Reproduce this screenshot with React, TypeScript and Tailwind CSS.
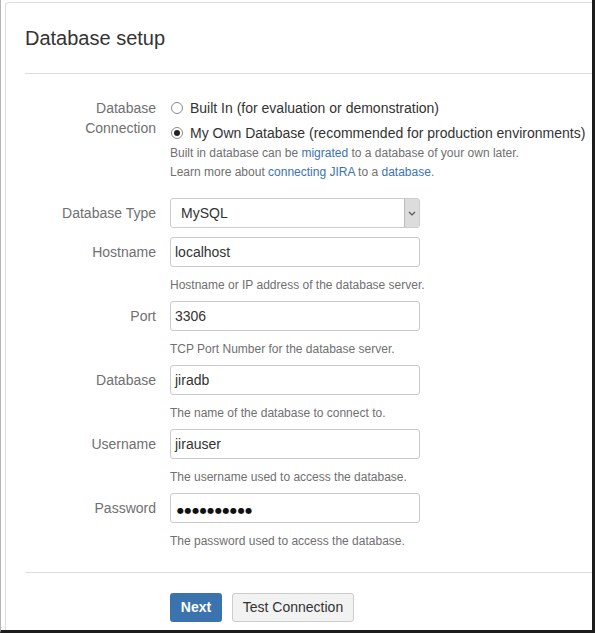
import { ReactNode } from "react";

const font = { fontFamily: '"Liberation Sans", Arial, sans-serif' };

function Label({ children, tall }: { children: ReactNode; tall?: boolean }) {
  return (
    <div
      className={
        "w-[131px] shrink-0 text-right text-[14px] text-[#707070] " +
        (tall ? "leading-[20px]" : "leading-[30px]")
      }
    >
      {children}
    </div>
  );
}

function Help({ children }: { children: ReactNode }) {
  return <div className="mt-[8px] text-[12px] leading-[20px] text-[#707070]">{children}</div>;
}

function Radio({ checked }: { checked?: boolean }) {
  return (
    <span className="inline-flex h-[12px] w-[12px] items-center justify-center rounded-full border border-[#8a8a8a] bg-white">
      {checked && <span className="h-[6px] w-[6px] rounded-full bg-[#222]" />}
    </span>
  );
}

function Field({
  label,
  value,
  help,
}: {
  label: string;
  value: ReactNode;
  help: string;
}) {
  return (
    <div className="mb-[6px] flex">
      <Label>{label}</Label>
      <div className="ml-[14px]">
        <div className="h-[30px] w-[250px] rounded-[3px] border border-[#cccccc] px-[4px] text-[14px] leading-[28px] text-[#333]">
          {value}
        </div>
        <Help>{help}</Help>
      </div>
    </div>
  );
}

export default function App() {
  return (
    <div
      style={font}
      className="h-[633px] w-[595px] overflow-hidden border-b-[3px] border-l border-r-[3px] border-b-[#1c1c1c] border-l-[#b5b5b5] border-r-[#1c1c1c] bg-white pl-[4px] pt-[2px]"
    >
      <div className="h-[640px] rounded-tl-[4px] border-l border-t border-[#dddddd] pl-[19px] pt-[21px]">
        <h1 className="text-[20px] leading-[28px] text-[#333]">Database setup</h1>
        <div className="mt-[21px] h-px bg-[#dddddd]" />

        <div className="mt-[24px] flex">
          <Label tall>
            Database
            <br />
            Connection
          </Label>
          <div className="ml-[14px]">
            <div className="flex h-[20px] items-center text-[14px] text-[#333]">
              <span className="ml-[1px] mr-[7px] flex">
                <Radio />
              </span>
              Built In (for evaluation or demonstration)
            </div>
            <div className="mt-[5px] flex h-[20px] items-center text-[14px] text-[#333]">
              <span className="ml-[1px] mr-[7px] flex">
                <Radio checked />
              </span>
              My Own Database (recommended for production environments)
            </div>
            <div className="mt-[1px] text-[12px] leading-[19px] text-[#707070]">
              Built in database can be <span className="text-[#3b73af]">migrated</span> to a
              database of your own later.
              <br />
              Learn more about <span className="text-[#3b73af]">connecting JIRA</span> to a{" "}
              <span className="text-[#3b73af]">database</span>.
            </div>
          </div>
        </div>

        <div className="mt-[16px] mb-[9px] flex">
          <Label>Database Type</Label>
          <div className="ml-[14px] flex h-[30px] w-[250px] items-stretch rounded-[3px] border border-[#cccccc]">
            <div className="flex-1 pl-[10px] text-[14px] leading-[28px] text-[#333]">MySQL</div>
            <div className="flex w-[15px] items-center justify-center rounded-r-[2px] border-l border-[#bbbbbb] bg-[#dcdcdc]">
              <svg width="8" height="5" viewBox="0 0 8 5">
                <path d="M1 1l3 3 3-3" fill="none" stroke="#555" strokeWidth="1.2" />
              </svg>
            </div>
          </div>
        </div>

        <Field label="Hostname" value="localhost" help="Hostname or IP address of the database server." />
        <Field label="Port" value="3306" help="TCP Port Number for the database server." />
        <Field label="Database" value="jiradb" help="The name of the database to connect to." />
        <Field label="Username" value="jirauser" help="The username used to access the database." />
        <Field
          label="Password"
          value={
            <span
              className="ml-[2px] text-[8px] tracking-[0.6px] text-[#111]"
              style={{ fontFamily: '"DejaVu Sans", sans-serif' }}
            >
              ●●●●●●●●●●
            </span>
          }
          help="The password used to access the database."
        />

        <div className="mt-[21px] h-px bg-[#dddddd]" />

        <div className="ml-[145px] mt-[20px] flex gap-[10px]">
          <button className="h-[29px] w-[52px] rounded-[3px] bg-[#3b73af] text-[14px] font-bold text-white">
            Next
          </button>
          <button className="h-[29px] w-[122px] rounded-[3px] border border-[#cccccc] bg-[#f2f2f2] text-[14px] text-[#333]">
            Test Connection
          </button>
        </div>
      </div>
    </div>
  );
}
